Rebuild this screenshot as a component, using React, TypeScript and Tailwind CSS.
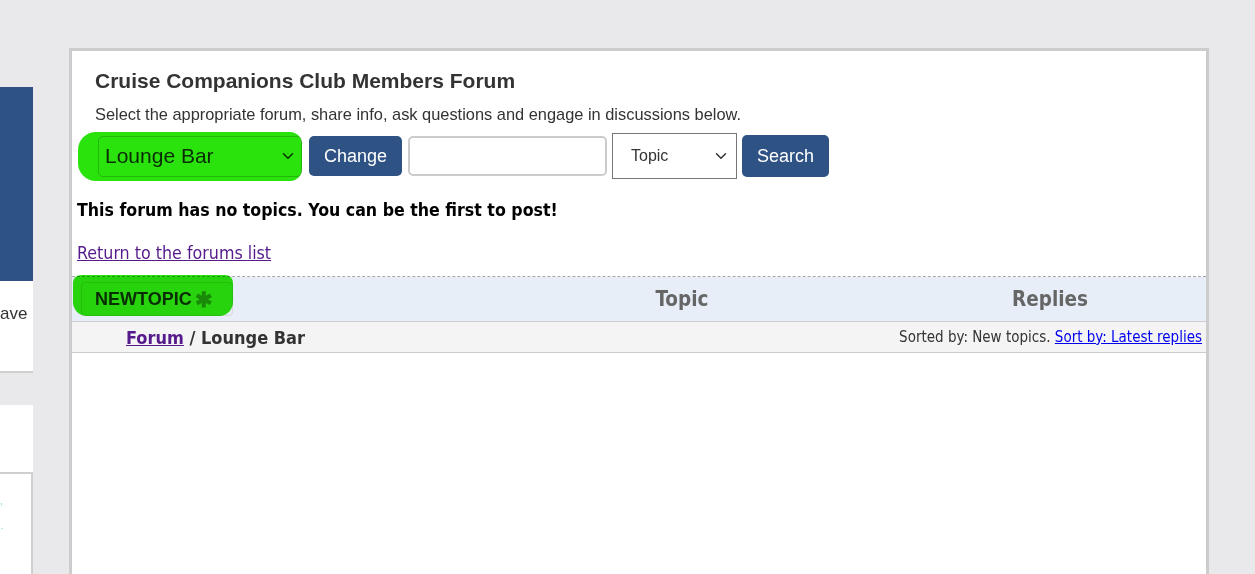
import { ChevronDown } from 'lucide-react'

const tahoma = { fontFamily: '"DejaVu Sans Condensed", "DejaVu Sans", sans-serif' }

export default function App() {
  return (
    <div
      className="flex h-[574px] w-[1255px] overflow-hidden bg-[#e9e9eb] text-[#333]"
      style={{ fontFamily: '"Liberation Sans", Arial, sans-serif' }}
    >
      {/* Left sidebar (cut off) */}
      <div className="flex w-[33px] shrink-0 flex-col overflow-hidden pt-[87px]">
        <div className="h-[194px] bg-[#2e5284]" />
        <div className="h-[92px] border-b-2 border-[#cfcfcf] bg-white pt-[20px]">
          <span className="whitespace-nowrap text-[17px]">ave</span>
        </div>
        <div className="mt-[32px] h-[67px] bg-white" />
        <div className="flex-1 border-t-2 border-r-2 border-[#cfcfcf] bg-white pt-[24px] text-[13px] text-[#a9dbe8]">
          ’<br />
          ·
        </div>
      </div>

      {/* Main forum panel */}
      <div className="ml-[36px] mt-[48px] w-[1140px] shrink-0 border-[3px] border-b-0 border-[#cccccc] bg-white">
        <div className="pl-[23px] pt-[18px]">
          <h1 className="text-[21px] font-bold leading-[24px]">Cruise Companions Club Members Forum</h1>
          <p className="mt-[12px] text-[16.4px] leading-[19px]">
            Select the appropriate forum, share info, ask questions and engage in discussions below.
          </p>
        </div>

        {/* Controls */}
        <div className="mt-[9px] flex h-[46px] items-center pl-[26px]">
          <div className="relative">
            <div className="flex h-[41px] w-[204px] items-center justify-between rounded-[5px] border border-[#cfcfcf] pl-[6px] pr-[4px] text-[21px]">
              <span>Lounge Bar</span>
              <ChevronDown className="h-[18px] w-[18px]" strokeWidth={2} />
            </div>
            <div className="pointer-events-none absolute left-[-20px] top-[-4px] h-[49px] w-[224px] rounded-l-[18px] rounded-r-[12px] bg-[#2ae20c] mix-blend-multiply" />
          </div>
          <button className="ml-[7px] h-[40px] w-[93px] rounded-[5px] bg-[#2e5284] text-[18px] text-white">
            Change
          </button>
          <div className="ml-[6px] h-[40px] w-[199px] rounded-[5px] border-2 border-[#cccccc]" />
          <div className="ml-[5px] flex h-[46px] w-[125px] items-center justify-between border border-[#767676] pl-[18px] pr-[6px] text-[16px]">
            <span>Topic</span>
            <ChevronDown className="h-[18px] w-[18px]" strokeWidth={2} />
          </div>
          <button className="ml-[5px] h-[42px] w-[87px] rounded-[5px] bg-[#2e5284] text-[18px] text-white">
            Search
          </button>
        </div>

        <div className="pl-[5px]">
          <p className="mt-[21px] text-[17.6px] font-bold leading-[20px] text-black" style={tahoma}>
            This forum has no topics. You can be the first to post!
          </p>
          <a href="#" className="mt-[22px] block text-[17.7px] leading-[22px] text-[#551a8b] underline" style={tahoma}>
            Return to the forums list
          </a>
        </div>

        {/* Table header */}
        <div className="mt-[12px] border-t border-dashed border-[#a8a8a8]" />
        <div className="grid h-[45px] grid-cols-[398px_424px_1fr] items-center border-b border-[#cccccc] bg-[#e7eef7]">
          <div className="relative flex h-full items-center pl-[9px]">
            <div className="flex h-[34px] w-[152px] items-center rounded-[4px] border border-[#d8d8d8] pl-[13px] text-[18px] font-bold">
              NEWTOPIC<span className="ml-[3px] text-[21px] leading-none text-[#999]">✱</span>
            </div>
            <div className="pointer-events-none absolute left-[1px] top-[-2px] h-[41px] w-[160px] rounded-b-[14px] rounded-t-[8px] bg-[#2ae20c] mix-blend-multiply" />
          </div>
          <div className="text-center text-[20.5px] font-bold text-[#666]" style={tahoma}>
            Topic
          </div>
          <div className="text-center text-[20.5px] font-bold text-[#666]" style={tahoma}>
            Replies
          </div>
        </div>

        {/* Breadcrumb */}
        <div className="flex h-[31px] items-center justify-between border-b border-[#cccccc] bg-[#f4f4f4] pl-[54px] pr-[4px]" style={tahoma}>
          <div className="text-[18px] font-bold">
            <a href="#" className="text-[#551a8b] underline">Forum</a> / Lounge Bar
          </div>
          <div className="text-[15px]">
            Sorted by: New topics.{' '}
            <a href="#" className="text-[#0000ee] underline">Sort by: Latest replies</a>
          </div>
        </div>
      </div>
    </div>
  )
}
